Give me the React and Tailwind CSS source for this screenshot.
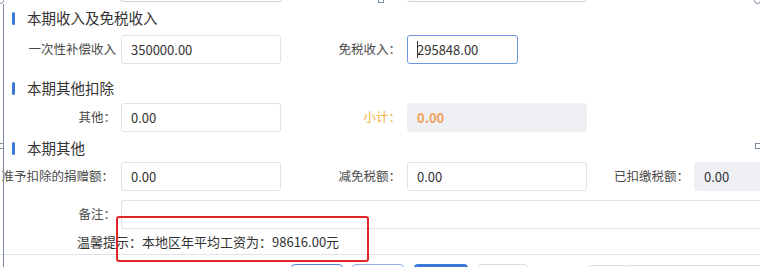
import React from "react";

const font = { fontFamily: '"Noto Sans CJK SC", "Noto Sans", sans-serif' };

function SectionTitle({ children, className = "" }) {
  return (
    <div className={"flex items-center h-[20px] pl-[12px] " + className}>
      <span className="w-[3px] h-[13px] rounded-full bg-[#3b78d8]" />
      <span className="ml-[12px] text-[14.5px] text-[#333] leading-none">{children}</span>
    </div>
  );
}

function Label({ children, w, className = "" }) {
  return (
    <div className={"text-right text-[12.5px] text-[#4a4a4a] whitespace-nowrap shrink-0 " + w + " " + className}>
      {children}
    </div>
  );
}

function Input({ value, w, gray, focus, orange, className = "" }) {
  return (
    <div
      className={
        "h-[29px] shrink-0 rounded-[3px] flex items-center pl-[9px] text-[13px] " +
        w +
        " " +
        (gray
          ? "bg-[#eef0f4] border border-[#eef0f4] "
          : focus
          ? "bg-white border border-[#6b95dc] "
          : "bg-white border border-[#dfe2e8] ") +
        (orange ? "text-[#f3a25a] font-bold " : "text-[#333] ") +
        className
      }
    >
      {focus && <span className="w-px h-[17px] bg-[#333] mr-[-1px]" />}
      {value}
    </div>
  );
}

export default function App() {
  return (
    <div style={font} className="relative w-[760px] h-[267px] overflow-hidden bg-white">
      {/* left frame line */}
      <div className="absolute left-[3px] top-[4px] bottom-0 w-px bg-[#7d8ba0]" />
      {/* selection handles */}
      <div className="absolute left-[-3px] top-[-3px] w-[7px] h-[7px] rounded-full border border-[#7d8ba0] bg-white" />
      <div className="absolute left-[378px] top-[-3px] w-[6px] h-[6px] border border-[#7d8ba0] bg-white" />
      <div className="absolute left-[754px] top-[-3px] w-[7px] h-[7px] rounded-full border border-[#7d8ba0] bg-white" />
      <div className="absolute left-[-2px] top-[143px] w-[6px] h-[6px] border border-[#7d8ba0] bg-white" />
      <div className="absolute left-[755px] top-[143px] w-[6px] h-[6px] border border-[#7d8ba0] bg-white" />

      <div className="flex flex-col">
        {/* cut-off inputs at top */}
        <div className="flex -mt-[27px] h-[29px]">
          <div className="ml-[120px] w-[162px] h-[29px] rounded-[3px] border border-[#cfd3da]" />
          <div className="ml-[125px] w-[180px] h-[29px] rounded-[3px] border border-[#cfd3da]" />
        </div>

        <SectionTitle className="mt-[6px]">本期收入及免税收入</SectionTitle>
        <div className="flex items-center mt-[7px]">
          <Label w="w-[116px]">一次性补偿收入</Label>
          <Input w="w-[160px] ml-[5px]" value="350000.00" />
          <Label w="w-[120px]">免税收入：</Label>
          <Input w="w-[111px] ml-[6px]" value="295848.00" focus />
        </div>

        <SectionTitle className="mt-[14px]">本期其他扣除</SectionTitle>
        <div className="flex items-center mt-[5px]">
          <Label w="w-[116px]">其他：</Label>
          <Input w="w-[160px] ml-[5px]" value="0.00" />
          <Label w="w-[120px]" className="text-[#f2b13e]">小计：</Label>
          <Input w="w-[180px] ml-[6px]" value="0.00" gray orange />
        </div>

        <SectionTitle className="mt-[6px]">本期其他</SectionTitle>
        <div className="flex items-center mt-[4px]">
          <Label w="w-[116px]" className="-ml-[2px] pr-0">准予扣除的捐赠额：</Label>
          <Input w="w-[160px] ml-[7px]" value="0.00" />
          <Label w="w-[120px]">减免税额：</Label>
          <Input w="w-[180px] ml-[6px]" value="0.00" />
          <Label w="w-[102px]">已扣缴税额：</Label>
          <Input w="w-[80px] ml-[5px]" value="0.00" gray />
        </div>

        <div className="flex items-center mt-[9px]">
          <Label w="w-[116px]">备注：</Label>
          <div className="ml-[5px] flex-1 h-[29px] rounded-l-[3px] border border-r-0 border-[#dfe2e8]" />
        </div>

        <div className="h-[25px] flex items-center pl-[77px] text-[13px] text-[#333] whitespace-nowrap">
          温馨提示：本地区年平均工资为：98616.00元
        </div>

        <div className="border-t border-[#dfe2e8] flex items-start pt-[9px]">
          <div className="ml-[291px] w-[52px] h-[20px] rounded-[4px] border border-[#4f83d6]" />
          <div className="ml-[9px] w-[52px] h-[20px] rounded-[4px] border border-[#8fb0e3]" />
          <div className="ml-[10px] w-[54px] h-[20px] rounded-[4px] bg-[#3b78d8]" />
          <div className="ml-[9px] w-[51px] h-[20px] rounded-[4px] border border-[#d8dbe0]" />
          <div className="ml-[60px] mt-[1px] w-[39px] h-[20px] rounded-[3px] border border-[#d8dbe0] relative overflow-hidden">
            <div className="absolute left-[12px] top-[1px] w-[18px] h-[18px] rounded-full bg-[#f06a2a]" />
            <div className="absolute left-[9px] top-[5px] w-[16px] h-[16px] rounded-full bg-white" />
          </div>
          <div className="mt-[1px] flex-1 h-[20px] border border-r-0 border-[#d8dbe0]" />
        </div>
      </div>

      {/* red highlight box */}
      <div className="absolute left-[116px] top-[216px] w-[253px] h-[46px] rounded-[3px] border-2 border-[#e0262b]" />
    </div>
  );
}
